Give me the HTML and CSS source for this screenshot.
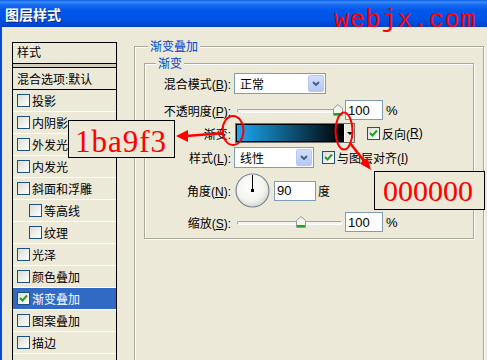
FILE: index.html
```html
<!DOCTYPE html>
<html lang="zh-CN">
<head>
  <meta charset="UTF-8">
  <meta name="viewport" content="width=device-width, initial-scale=1.0">
  <title>图层样式</title>
  <link rel="stylesheet" href="styles.css">
</head>
<body>
  <div class="window">
    <div class="titlebar">
      <span class="title">图层样式</span>
    </div>
    <div class="client">
      <ul class="style-list">
        <li class="list-head">样式</li>
        <li class="list-blend">混合选项:默认</li>
        <li><span class="check"></span>投影</li>
        <li><span class="check"></span>内阴影</li>
        <li><span class="check"></span>外发光</li>
        <li><span class="check"></span>内发光</li>
        <li><span class="check"></span>斜面和浮雕</li>
        <li class="sub"><span class="check"></span>等高线</li>
        <li class="sub"><span class="check"></span>纹理</li>
        <li><span class="check"></span>光泽</li>
        <li><span class="check"></span>颜色叠加</li>
        <li class="active"><span class="check"><svg width="11" height="11" viewBox="0 0 11 11"><path d="M2 5 L4.5 7.5 L9 2.5" fill="none" stroke="#21a121" stroke-width="2"/></svg></span>渐变叠加</li>
        <li><span class="check"></span>图案叠加</li>
        <li><span class="check"></span>描边</li>
        <li></li>
      </ul>

      <fieldset class="group group-outer">
        <legend>渐变叠加</legend>
        <fieldset class="group group-inner">
          <legend>渐变</legend>

          <div class="row row-blend">
            <label>混合模式(<u>B</u>):</label>
            <div class="select select-blend">
              <span>正常</span>
              <i class="drop"><svg width="8" height="5" viewBox="0 0 8 5"><path d="M1 1 L4 4 L7 1" fill="none" stroke="#4d6185" stroke-width="2"/></svg></i>
            </div>
          </div>

          <div class="row row-opacity">
            <label>不透明度(<u>P</u>):</label>
            <div class="slider">
              <div class="track"></div>
              <div class="thumb" style="left: 99px"><svg width="10" height="12" viewBox="0 0 10 12"><path d="M0.5 4.5 L5 0.5 L9.5 4.5 V11.5 H0.5 Z" fill="#f3f3ef" stroke="#9a9a94"/><rect x="1" y="9" width="8" height="2" fill="#21a121"/></svg></div>
            </div>
            <input class="num" type="text" value="100">
            <span class="unit">%</span>
          </div>

          <div class="row row-gradient">
            <label>渐变:</label>
            <div class="gradient-picker">
              <div class="gradient-swatch"></div>
              <div class="gradient-arrow"><i></i></div>
            </div>
            <div class="opt opt-reverse"><span class="check"><svg width="11" height="11" viewBox="0 0 11 11"><path d="M2 5 L4.5 7.5 L9 2.5" fill="none" stroke="#21a121" stroke-width="2"/></svg></span>反向(<u>R</u>)</div>
          </div>

          <div class="row row-style">
            <label>样式(<u>L</u>):</label>
            <div class="select select-style">
              <span>线性</span>
              <i class="drop"><svg width="8" height="5" viewBox="0 0 8 5"><path d="M1 1 L4 4 L7 1" fill="none" stroke="#4d6185" stroke-width="2"/></svg></i>
            </div>
            <div class="opt opt-align"><span class="check"><svg width="11" height="11" viewBox="0 0 11 11"><path d="M2 5 L4.5 7.5 L9 2.5" fill="none" stroke="#21a121" stroke-width="2"/></svg></span>与图层对齐(<u>I</u>)</div>
          </div>

          <div class="row row-angle">
            <label>角度(<u>N</u>):</label>
            <svg class="dial" width="36" height="35" viewBox="0 0 36 35">
              <defs>
                <radialGradient id="dialFill" cx="45%" cy="40%" r="60%">
                  <stop offset="0" stop-color="#ffffff"/>
                  <stop offset="0.7" stop-color="#f3f3ee"/>
                  <stop offset="1" stop-color="#d6d6cf"/>
                </radialGradient>
              </defs>
              <circle cx="18.5" cy="17.5" r="16.5" fill="url(#dialFill)" stroke="#7a8797" stroke-width="1.2"/>
              <line x1="18.5" y1="17.5" x2="18.5" y2="2" stroke="#000" stroke-width="1"/>
              <rect x="17" y="16" width="3" height="3" fill="#000"/>
            </svg>
            <input class="num num-angle" type="text" value="90">
            <span class="unit">度</span>
          </div>

          <div class="row row-scale">
            <label>缩放(<u>S</u>):</label>
            <div class="slider">
              <div class="track"></div>
              <div class="thumb" style="left: 62px"><svg width="10" height="12" viewBox="0 0 10 12"><path d="M0.5 4.5 L5 0.5 L9.5 4.5 V11.5 H0.5 Z" fill="#f3f3ef" stroke="#9a9a94"/><rect x="1" y="9" width="8" height="2" fill="#21a121"/></svg></div>
            </div>
            <input class="num" type="text" value="100">
            <span class="unit">%</span>
          </div>
        </fieldset>
      </fieldset>
    </div>

    <!-- 标注 -->
    <span class="watermark">webjx.com</span>
    <div class="note note-left">1ba9f3</div>
    <div class="note note-right">000000</div>
    <svg class="marks" width="487" height="360" viewBox="0 0 487 360">
      <ellipse cx="233" cy="130.5" rx="10.5" ry="14.5" fill="none" stroke="#f00" stroke-width="2"/>
      <ellipse cx="344" cy="131" rx="8.5" ry="18.5" fill="none" stroke="#f00" stroke-width="2"/>
      <line x1="224" y1="133" x2="186" y2="136" stroke="#f00" stroke-width="2.5"/>
      <polygon points="176,136 188,130 188,142" fill="#f00"/>
      <line x1="350" y1="143" x2="364" y2="161" stroke="#f00" stroke-width="2.5"/>
      <polygon points="371,170 359.8,163.5 367.6,157.5" fill="#f00"/>
    </svg>
  </div>
</body>
</html>
```

FILE: styles.css
```css
* {
  box-sizing: border-box;
}
html, body {
  margin: 0;
  padding: 0;
}
body {
  width: 487px;
  height: 360px;
  overflow: hidden;
  font-family: "Liberation Sans", "Noto Sans CJK SC", sans-serif;
  font-size: 12px;
  color: #000;
  background: #ece9d8;
}
.window {
  position: relative;
  height: 360px;
}
.titlebar {
  height: 27px;
  display: flex;
  align-items: center;
  padding-left: 5px;
  background: linear-gradient(to bottom, #0a5ee8 0, #3b8cf5 2px, #1668f0 5px, #0058ea 10px, #0053e4 19px, #0049d6 24px, #003fc3 27px);
}
.title {
  color: #fff;
  font-family: "Noto Sans CJK SC", sans-serif;
  font-weight: bold;
  font-size: 14px;
  text-shadow: 1px 1px 0 #0b2a8a;
}
.watermark {
  position: absolute;
  left: 334px;
  top: 8px;
  font-family: "Liberation Mono", monospace;
  font-size: 25px;
  line-height: 25px;
  letter-spacing: 0.8px;
  color: #f00;
}

.client {
  display: flex;
  align-items: flex-start;
  height: 333px;
  padding-left: 10px;
  border-left: 2px solid #0a4bd3;
  overflow: hidden;
}

/* 左侧样式列表 */
.style-list {
  flex: none;
  width: 105px;
  height: 330px;
  margin: 15px 0 0;
  padding: 0;
  list-style: none;
  border: 1px solid #000;
}
.style-list li {
  display: flex;
  align-items: center;
  height: 22px;
  padding-left: 4px;
  border-bottom: 1px solid #fff;
  white-space: nowrap;
}
.style-list li.list-head {
  display: block;
  height: 25px;
  line-height: 20px;
  border-bottom: 1px solid #000;
  background: linear-gradient(to bottom, transparent 20px, #000 20px, #000 21px, #d2cebe 21px);
}
.style-list li.list-blend {
  border-bottom-color: #000;
}
.style-list li.sub {
  padding-left: 16px;
}
.style-list li.active {
  background: #316ac5;
  color: #fff;
}
.check {
  flex: none;
  width: 13px;
  height: 13px;
  margin-right: 2px;
  border: 1px solid #1c5180;
  background: linear-gradient(135deg, #dcdcd6, #fff);
}
.check svg {
  display: block;
}

/* 分组框 */
.group {
  margin: 0;
  padding: 0;
  min-width: 0;
  border: 1px solid #aca899;
  box-shadow: inset 1px 1px 0 #fff, 1px 1px 0 #fff;
}
.group legend {
  padding: 0 2px;
  line-height: 14px;
  color: #0046d5;
  font-family: "Noto Sans CJK SC", sans-serif;
  font-size: 12px;
  background: #ece9d8;
}
.group-outer {
  flex: none;
  width: 350px;
  height: 360px;
  margin: 12px 0 0 17px;
  padding: 3px 9px 0 9px;
}
.group-outer > legend {
  margin-left: 4px;
}
.group-inner {
  width: 330px;
  padding: 3px 0 6px 0;
}
.group-inner > legend {
  margin-left: 11px;
}

/* 表单行 */
.row {
  display: flex;
  align-items: center;
}
.row label {
  flex: none;
  width: 86px;
  margin-right: 3px;
  text-align: right;
  white-space: nowrap;
}
.row-blend { height: 21px; }
.row-opacity { height: 20px; margin-top: 6px; }
.row-gradient { height: 20px; margin-top: 3px; }
.row-style { height: 21px; margin-top: 4px; }
.row-angle { height: 35px; margin-top: 5px; }
.row-scale { height: 20px; margin-top: 4px; }

.select {
  flex: none;
  display: flex;
  align-items: center;
  height: 21px;
  border: 1px solid #7f9db9;
  background: #fff;
}
.select span {
  flex: 1;
  padding-left: 5px;
}
.select-blend { width: 92px; }
.select-style { width: 80px; }
.drop {
  display: flex;
  align-items: center;
  justify-content: center;
  width: 16px;
  height: 17px;
  margin-right: 1px;
  border: 1px solid #b9c9ef;
  border-radius: 2px;
  background: linear-gradient(to bottom, #d2defc, #b4c8f6);
}
.drop svg {
  display: block;
}

.slider {
  position: relative;
  flex: none;
  width: 108px;
  height: 20px;
}
.track {
  position: absolute;
  left: 3px;
  right: 0;
  top: 9px;
  height: 4px;
  border: 1px solid;
  border-color: #a5a49f #fff #fff #a5a49f;
  border-radius: 2px;
  background: #f4f3ee;
}
.thumb {
  position: absolute;
  top: 4px;
  width: 10px;
  height: 12px;
}
.thumb svg {
  display: block;
}

.num {
  flex: none;
  width: 38px;
  height: 20px;
  margin: 0 0 0 3px;
  padding: 0 0 0 2px;
  border: 1px solid #7f9db9;
  background: #fff;
  font-family: "Liberation Sans", sans-serif;
  font-size: 13px;
  color: #000;
}
.num-angle {
  width: 42px;
  margin-left: 4px;
}
.unit {
  margin-left: 3px;
  font-size: 13px;
}
.row-angle .unit {
  margin-left: 2px;
  font-size: 12px;
}

.gradient-picker {
  flex: none;
  display: flex;
  width: 120px;
  height: 20px;
  margin-left: 1px;
  border: 1px solid #6f6f6f;
  background: #ece9d8;
}
.gradient-swatch {
  flex: 1;
  border: 1px solid #000;
  background: linear-gradient(to right, #1ba9f3, #000);
}
.gradient-arrow {
  display: flex;
  align-items: center;
  justify-content: center;
  width: 10px;
  border-left: 1px solid #fff;
}
.gradient-arrow i {
  border-left: 3px solid transparent;
  border-right: 3px solid transparent;
  border-top: 3px solid #000;
}

.opt {
  display: flex;
  align-items: center;
  white-space: nowrap;
}
.opt-reverse { margin-left: 12px; }
.opt-align { margin-left: 8px; }
.opt .check {
  margin-right: 2px;
}

.dial {
  flex: none;
  display: block;
}

/* 红色标注 */
.note {
  position: absolute;
  border: 1px solid #000;
  background: #ece9d8;
  color: #f00;
  font-family: "Liberation Serif", serif;
  white-space: nowrap;
}
.note-left {
  left: 68px;
  top: 120px;
  width: 107px;
  height: 38px;
  padding: 5px 0 0 6px;
  font-size: 31px;
  line-height: 31px;
  letter-spacing: 1px;
}
.note-right {
  left: 374px;
  top: 171px;
  width: 111px;
  height: 39px;
  padding: 4px 0 0 8px;
  font-size: 30px;
  line-height: 30px;
}
.marks {
  position: absolute;
  left: 0;
  top: 0;
  pointer-events: none;
}
```
